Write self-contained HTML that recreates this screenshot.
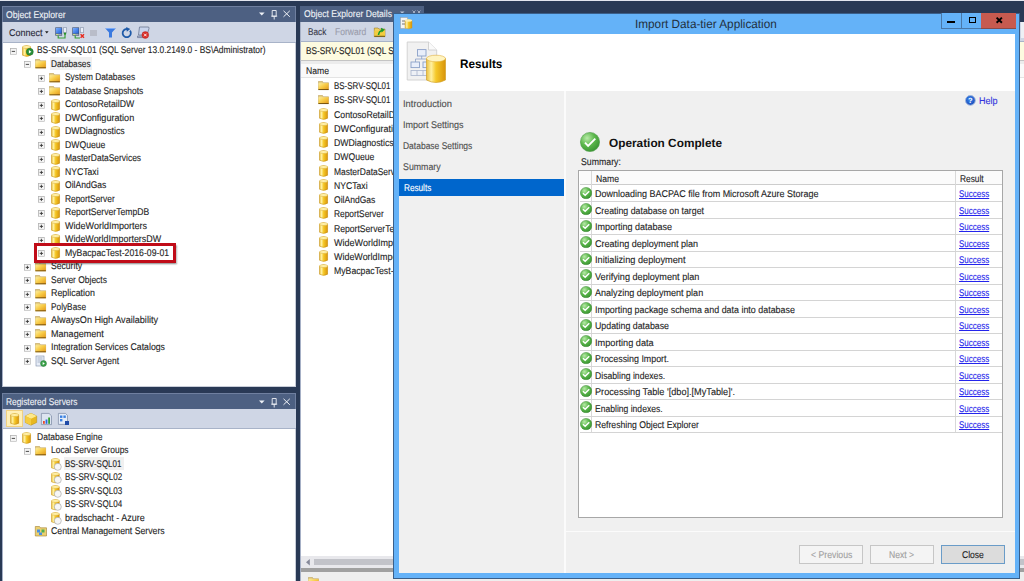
<!DOCTYPE html><html><head><meta charset="utf-8"><title>SSMS</title><style>
*{margin:0;padding:0;box-sizing:border-box}
html,body{width:1024px;height:581px;overflow:hidden;background:#293955;font-family:"Liberation Sans",sans-serif;color:#1e1e1e;text-rendering:geometricPrecision}
.a{position:absolute}
.t{position:absolute;white-space:nowrap;line-height:1;transform-origin:0 0;-webkit-text-stroke:0.12px currentColor}
svg.i{position:absolute;overflow:visible}
</style></head><body>

<svg width="0" height="0" style="position:absolute">
<defs>
<linearGradient id="gold" x1="0" x2="1" y1="0" y2="0">
<stop offset="0" stop-color="#e9c040"/><stop offset="0.25" stop-color="#fff0a0"/><stop offset="0.5" stop-color="#f5c828"/><stop offset="1" stop-color="#d8940a"/>
</linearGradient>
<linearGradient id="fold" x1="0" x2="1" y1="0" y2="1">
<stop offset="0" stop-color="#fff0a0"/><stop offset="0.45" stop-color="#f8cc48"/><stop offset="1" stop-color="#e29618"/>
</linearGradient>
<radialGradient id="grn" cx="0.35" cy="0.3" r="0.85">
<stop offset="0" stop-color="#b8eaa8"/><stop offset="0.45" stop-color="#5cb84c"/><stop offset="1" stop-color="#2f8a2a"/>
</radialGradient>
<linearGradient id="scr" x1="0" y1="0" x2="1" y2="1"><stop offset="0" stop-color="#7fb2ff"/><stop offset="1" stop-color="#1f5fd8"/></linearGradient>
<symbol id="db" viewBox="0 0 9 12"><path d="M0.4 2 Q4.5 -0.4 8.6 2 V10.2 Q4.5 12.6 0.4 10.2Z" fill="url(#gold)" stroke="#c08a10" stroke-width="0.5"/><ellipse cx="4.5" cy="2" rx="4.1" ry="1.5" fill="#fff0a8" stroke="#d0a020" stroke-width="0.4"/></symbol>
<symbol id="folder" viewBox="0 0 11 9.5"><path d="M0.3 0.3 H4.3 L5.2 1.8 H10.7 V9.2 H0.3Z" fill="#e6cf80" stroke="#b09050" stroke-width="0.5"/><path d="M0.3 2.2 H10.7 V9.2 H0.3Z" fill="url(#fold)"/><path d="M0.3 8.9 H10.7" stroke="#5a3c08" stroke-width="0.9"/></symbol>
<symbol id="plus" viewBox="0 0 7 7"><rect x="0.4" y="0.4" width="6.2" height="6.2" fill="#f4f4f4" stroke="#b0b0b0" stroke-width="0.8"/><path d="M1.8 3.5H5.2M3.5 1.8V5.2" stroke="#333" stroke-width="0.9"/></symbol>
<symbol id="minus" viewBox="0 0 7 7"><rect x="0.4" y="0.4" width="6.2" height="6.2" fill="#f4f4f4" stroke="#b0b0b0" stroke-width="0.8"/><path d="M1.8 3.5H5.2" stroke="#333" stroke-width="0.9"/></symbol>
<symbol id="chk" viewBox="0 0 12 12"><circle cx="6" cy="6" r="5.6" fill="url(#grn)" stroke="#3f8a35" stroke-width="0.5"/><path d="M2.9 6.1 L5.1 8.2 L9.1 4.1" fill="none" stroke="#fff" stroke-width="1.4"/></symbol>
</defs></svg>

<div class="a" style="left:0px;top:0px;width:1024px;height:1.4px;background:#e3e6ef;"></div>
<div class="a" style="left:2px;top:6px;width:294px;height:16px;background:#4d6082;border:1px solid #6f7f9f;border-bottom:none"></div>
<div class="t" style="left:6.20px;top:10.60px;font-size:9.8px;color:#eef1f6;font-weight:normal;transform:scaleX(0.8840);">Object Explorer</div>
<svg class="i" style="left:259px;top:10.3px" width="32" height="10"><path d="M0 2.6 H5.6 L2.8 5.4Z" fill="#eef1f6"/><path d="M13.2 0.5 H17.2 V6.2 H13.2Z M12.2 6.2 H18.2 M15.2 6.2 V9.5" fill="none" stroke="#eef1f6" stroke-width="0.9"/><path d="M24.5 0.8 L30.8 6.8 M30.8 0.8 L24.5 6.8" stroke="#eef1f6" stroke-width="1"/></svg>
<div class="a" style="left:2px;top:22px;width:294px;height:20.5px;background:#cfd6e5;border-left:1px solid #a6b0c6;border-bottom:1px solid #a8b3c8"></div>
<div class="a" style="left:2px;top:42.5px;width:293.5px;height:344.5px;background:#fff;border-left:1px solid #a6b0c6;border-right:1px solid #c8cdd8;border-bottom:1px solid #c8cdd8"></div>
<div class="t" style="left:8.50px;top:29.20px;font-size:9.8px;color:#2a2a38;font-weight:normal;transform:scaleX(0.9178);">Connect</div>
<svg class="i" style="left:45px;top:31px" width="4" height="3"><path d="M0 0.3H3.6L1.8 2.4Z" fill="#1e1e1e"/></svg>
<svg class="i" style="left:55px;top:27px" width="13" height="12"><rect x="0.3" y="0.4" width="6.8" height="8.2" fill="#3c4a66"/><rect x="0.8" y="0.9" width="5.8" height="5.6" fill="url(#scr)"/><rect x="0.8" y="6.8" width="5.8" height="1.3" fill="#9aa8c0"/><rect x="1.2" y="7.0" width="2" height="0.9" fill="#d8e870"/><rect x="8.2" y="0.2" width="3.5" height="5.8" fill="#8a96ac"/><rect x="8.8" y="0.8" width="2.3" height="4.6" fill="#e8eef8"/><path d="M3.2 8.6 V11 H10 V6.2" fill="none" stroke="#3aa03a" stroke-width="1.2"/><circle cx="10" cy="6.6" r="1.2" fill="#2a902a"/></svg>
<svg class="i" style="left:71.5px;top:27px" width="13" height="12"><rect x="0.3" y="0.4" width="6.8" height="8.2" fill="#3c4a66"/><rect x="0.8" y="0.9" width="5.8" height="5.6" fill="url(#scr)"/><rect x="0.8" y="6.8" width="5.8" height="1.3" fill="#9aa8c0"/><rect x="1.2" y="7.0" width="2" height="0.9" fill="#d8e870"/><rect x="8.2" y="0.2" width="3.5" height="5.8" fill="#8a96ac"/><rect x="8.8" y="0.8" width="2.3" height="4.6" fill="#e8eef8"/><path d="M3.2 8.6 V11 H8" fill="none" stroke="#3aa03a" stroke-width="1.2"/><path d="M8.6 7.3 L12 10.7 M12 7.3 L8.6 10.7" stroke="#e8281c" stroke-width="1.4"/></svg>
<div class="a" style="left:90.3px;top:30px;width:6.5px;height:6.2px;background:#b9bdc9;"></div>
<svg class="i" style="left:105px;top:27.5px" width="11" height="10"><path d="M0.2 0.2 H10.8 L7 4.5 V9.4 H4 V4.5Z" fill="#3a7ae0"/><path d="M0.8 0.5H10.2" stroke="#8ab8ff" stroke-width="0.7"/></svg>
<svg class="i" style="left:122px;top:27px" width="10" height="11"><path d="M8 3.6 A4.1 4.1 0 1 1 5 2" fill="none" stroke="#1e5aa8" stroke-width="1.8"/><path d="M4.2 0 L8.3 2.1 L4.8 4.7Z" fill="#1e5aa8"/></svg>
<svg class="i" style="left:137px;top:26px" width="13" height="13"><path d="M2.5 1 H11 Q12.5 1 12 2.5 L10 9 H1.5Z" fill="#c8d4ec" stroke="#6a7690" stroke-width="0.8"/><path d="M0.5 10 H9 V11.6 H0.5Z" fill="#a8b6d4" stroke="#6a7690" stroke-width="0.7"/><circle cx="8.3" cy="9" r="3.4" fill="#d9302a" stroke="#b02020" stroke-width="0.4"/><path d="M7 7.7 L9.6 10.3 M9.6 7.7 L7 10.3" stroke="#fff" stroke-width="0.9"/></svg>
<div class="a" style="left:49.7px;top:57.4px;width:42.3px;height:13.1px;background:#f0f0f0;"></div>
<svg class="i" style="left:9.90px;top:47.90px" width="6.8" height="6.8"><use href="#minus" width="6.8" height="6.8"/></svg>
<svg class="i" style="left:22.00px;top:44.80px" width="9.2" height="12"><use href="#db" width="9.2" height="12"/></svg>
<svg class="i" style="left:25.6px;top:48.4px" width="8" height="8"><circle cx="3.8" cy="3.8" r="3.5" fill="#2a9038" stroke="#1d6d26" stroke-width="0.5"/><path d="M2.9 2.1 L5.4 3.8 L2.9 5.5Z" fill="#fff"/></svg>
<div class="t" style="left:36.60px;top:46.00px;font-size:9.8px;color:#1e1e1e;font-weight:normal;transform:scaleX(0.8585);">BS-SRV-SQL01 (SQL Server 13.0.2149.0 - BS\Administrator)</div>
<svg class="i" style="left:24.10px;top:61.40px" width="6.8" height="6.8"><use href="#minus" width="6.8" height="6.8"/></svg>
<svg class="i" style="left:34.85px;top:59.30px" width="11.3" height="9.5"><use href="#folder" width="11.3" height="9.5"/></svg>
<div class="t" style="left:50.95px;top:59.50px;font-size:9.8px;color:#1e1e1e;font-weight:normal;transform:scaleX(0.8454);">Databases</div>
<svg class="i" style="left:38.30px;top:74.90px" width="6.8" height="6.8"><use href="#plus" width="6.8" height="6.8"/></svg>
<svg class="i" style="left:49.20px;top:72.80px" width="11.3" height="9.5"><use href="#folder" width="11.3" height="9.5"/></svg>
<div class="t" style="left:65.30px;top:73.00px;font-size:9.8px;color:#1e1e1e;font-weight:normal;transform:scaleX(0.8524);">System Databases</div>
<svg class="i" style="left:38.30px;top:88.40px" width="6.8" height="6.8"><use href="#plus" width="6.8" height="6.8"/></svg>
<svg class="i" style="left:49.20px;top:86.30px" width="11.3" height="9.5"><use href="#folder" width="11.3" height="9.5"/></svg>
<div class="t" style="left:65.30px;top:86.50px;font-size:9.8px;color:#1e1e1e;font-weight:normal;transform:scaleX(0.8607);">Database Snapshots</div>
<svg class="i" style="left:38.30px;top:101.90px" width="6.8" height="6.8"><use href="#plus" width="6.8" height="6.8"/></svg>
<svg class="i" style="left:50.70px;top:98.80px" width="9.2" height="12"><use href="#db" width="9.2" height="12"/></svg>
<div class="t" style="left:65.30px;top:100.00px;font-size:9.8px;color:#1e1e1e;font-weight:normal;transform:scaleX(0.8888);">ContosoRetailDW</div>
<svg class="i" style="left:38.30px;top:115.40px" width="6.8" height="6.8"><use href="#plus" width="6.8" height="6.8"/></svg>
<svg class="i" style="left:50.70px;top:112.30px" width="9.2" height="12"><use href="#db" width="9.2" height="12"/></svg>
<div class="t" style="left:65.30px;top:113.50px;font-size:9.8px;color:#1e1e1e;font-weight:normal;transform:scaleX(0.9275);">DWConfiguration</div>
<svg class="i" style="left:38.30px;top:128.90px" width="6.8" height="6.8"><use href="#plus" width="6.8" height="6.8"/></svg>
<svg class="i" style="left:50.70px;top:125.80px" width="9.2" height="12"><use href="#db" width="9.2" height="12"/></svg>
<div class="t" style="left:65.30px;top:127.00px;font-size:9.8px;color:#1e1e1e;font-weight:normal;transform:scaleX(0.8915);">DWDiagnostics</div>
<svg class="i" style="left:38.30px;top:142.40px" width="6.8" height="6.8"><use href="#plus" width="6.8" height="6.8"/></svg>
<svg class="i" style="left:50.70px;top:139.30px" width="9.2" height="12"><use href="#db" width="9.2" height="12"/></svg>
<div class="t" style="left:65.30px;top:140.50px;font-size:9.8px;color:#1e1e1e;font-weight:normal;transform:scaleX(0.8831);">DWQueue</div>
<svg class="i" style="left:38.30px;top:155.90px" width="6.8" height="6.8"><use href="#plus" width="6.8" height="6.8"/></svg>
<svg class="i" style="left:50.70px;top:152.80px" width="9.2" height="12"><use href="#db" width="9.2" height="12"/></svg>
<div class="t" style="left:65.30px;top:154.00px;font-size:9.8px;color:#1e1e1e;font-weight:normal;transform:scaleX(0.8628);">MasterDataServices</div>
<svg class="i" style="left:38.30px;top:169.40px" width="6.8" height="6.8"><use href="#plus" width="6.8" height="6.8"/></svg>
<svg class="i" style="left:50.70px;top:166.30px" width="9.2" height="12"><use href="#db" width="9.2" height="12"/></svg>
<div class="t" style="left:65.30px;top:167.50px;font-size:9.8px;color:#1e1e1e;font-weight:normal;transform:scaleX(0.8817);">NYCTaxi</div>
<svg class="i" style="left:38.30px;top:182.90px" width="6.8" height="6.8"><use href="#plus" width="6.8" height="6.8"/></svg>
<svg class="i" style="left:50.70px;top:179.80px" width="9.2" height="12"><use href="#db" width="9.2" height="12"/></svg>
<div class="t" style="left:65.30px;top:181.00px;font-size:9.8px;color:#1e1e1e;font-weight:normal;transform:scaleX(0.8718);">OilAndGas</div>
<svg class="i" style="left:38.30px;top:196.40px" width="6.8" height="6.8"><use href="#plus" width="6.8" height="6.8"/></svg>
<svg class="i" style="left:50.70px;top:193.30px" width="9.2" height="12"><use href="#db" width="9.2" height="12"/></svg>
<div class="t" style="left:65.30px;top:194.50px;font-size:9.8px;color:#1e1e1e;font-weight:normal;transform:scaleX(0.8530);">ReportServer</div>
<svg class="i" style="left:38.30px;top:209.90px" width="6.8" height="6.8"><use href="#plus" width="6.8" height="6.8"/></svg>
<svg class="i" style="left:50.70px;top:206.80px" width="9.2" height="12"><use href="#db" width="9.2" height="12"/></svg>
<div class="t" style="left:65.30px;top:208.00px;font-size:9.8px;color:#1e1e1e;font-weight:normal;transform:scaleX(0.8787);">ReportServerTempDB</div>
<svg class="i" style="left:38.30px;top:223.40px" width="6.8" height="6.8"><use href="#plus" width="6.8" height="6.8"/></svg>
<svg class="i" style="left:50.70px;top:220.30px" width="9.2" height="12"><use href="#db" width="9.2" height="12"/></svg>
<div class="t" style="left:65.30px;top:221.50px;font-size:9.8px;color:#1e1e1e;font-weight:normal;transform:scaleX(0.9213);">WideWorldImporters</div>
<svg class="i" style="left:38.30px;top:236.90px" width="6.8" height="6.8"><use href="#plus" width="6.8" height="6.8"/></svg>
<svg class="i" style="left:50.70px;top:233.80px" width="9.2" height="12"><use href="#db" width="9.2" height="12"/></svg>
<div class="t" style="left:65.30px;top:235.00px;font-size:9.8px;color:#1e1e1e;font-weight:normal;transform:scaleX(0.9125);">WideWorldImportersDW</div>
<svg class="i" style="left:38.30px;top:250.40px" width="6.8" height="6.8"><use href="#plus" width="6.8" height="6.8"/></svg>
<svg class="i" style="left:50.70px;top:247.30px" width="9.2" height="12"><use href="#db" width="9.2" height="12"/></svg>
<div class="t" style="left:65.30px;top:248.50px;font-size:9.8px;color:#1e1e1e;font-weight:normal;transform:scaleX(0.8890);">MyBacpacTest-2016-09-01</div>
<svg class="i" style="left:24.10px;top:263.90px" width="6.8" height="6.8"><use href="#plus" width="6.8" height="6.8"/></svg>
<svg class="i" style="left:34.85px;top:261.80px" width="11.3" height="9.5"><use href="#folder" width="11.3" height="9.5"/></svg>
<div class="t" style="left:50.95px;top:262.00px;font-size:9.8px;color:#1e1e1e;font-weight:normal;transform:scaleX(0.8788);">Security</div>
<svg class="i" style="left:24.10px;top:277.40px" width="6.8" height="6.8"><use href="#plus" width="6.8" height="6.8"/></svg>
<svg class="i" style="left:34.85px;top:275.30px" width="11.3" height="9.5"><use href="#folder" width="11.3" height="9.5"/></svg>
<div class="t" style="left:50.95px;top:275.50px;font-size:9.8px;color:#1e1e1e;font-weight:normal;transform:scaleX(0.8627);">Server Objects</div>
<svg class="i" style="left:24.10px;top:290.90px" width="6.8" height="6.8"><use href="#plus" width="6.8" height="6.8"/></svg>
<svg class="i" style="left:34.85px;top:288.80px" width="11.3" height="9.5"><use href="#folder" width="11.3" height="9.5"/></svg>
<div class="t" style="left:50.95px;top:289.00px;font-size:9.8px;color:#1e1e1e;font-weight:normal;transform:scaleX(0.9057);">Replication</div>
<svg class="i" style="left:24.10px;top:304.40px" width="6.8" height="6.8"><use href="#plus" width="6.8" height="6.8"/></svg>
<svg class="i" style="left:34.85px;top:302.30px" width="11.3" height="9.5"><use href="#folder" width="11.3" height="9.5"/></svg>
<div class="t" style="left:50.95px;top:302.50px;font-size:9.8px;color:#1e1e1e;font-weight:normal;transform:scaleX(0.8456);">PolyBase</div>
<svg class="i" style="left:24.10px;top:317.90px" width="6.8" height="6.8"><use href="#plus" width="6.8" height="6.8"/></svg>
<svg class="i" style="left:34.85px;top:315.80px" width="11.3" height="9.5"><use href="#folder" width="11.3" height="9.5"/></svg>
<div class="t" style="left:50.95px;top:316.00px;font-size:9.8px;color:#1e1e1e;font-weight:normal;transform:scaleX(0.9283);">AlwaysOn High Availability</div>
<svg class="i" style="left:24.10px;top:331.40px" width="6.8" height="6.8"><use href="#plus" width="6.8" height="6.8"/></svg>
<svg class="i" style="left:34.85px;top:329.30px" width="11.3" height="9.5"><use href="#folder" width="11.3" height="9.5"/></svg>
<div class="t" style="left:50.95px;top:329.50px;font-size:9.8px;color:#1e1e1e;font-weight:normal;transform:scaleX(0.9233);">Management</div>
<svg class="i" style="left:24.10px;top:344.90px" width="6.8" height="6.8"><use href="#plus" width="6.8" height="6.8"/></svg>
<svg class="i" style="left:34.85px;top:342.80px" width="11.3" height="9.5"><use href="#folder" width="11.3" height="9.5"/></svg>
<div class="t" style="left:50.95px;top:343.00px;font-size:9.8px;color:#1e1e1e;font-weight:normal;transform:scaleX(0.8907);">Integration Services Catalogs</div>
<svg class="i" style="left:24.10px;top:358.40px" width="6.8" height="6.8"><use href="#plus" width="6.8" height="6.8"/></svg>
<svg class="i" style="left:34.95px;top:354.90px" width="12" height="12"><rect x="1" y="1" width="8" height="10" fill="#e8eef8" stroke="#7d8da8" stroke-width="0.6"/><path d="M2.5 3H7.5M2.5 5H7.5M2.5 7H6" stroke="#7d8da8" stroke-width="0.6"/><circle cx="8.5" cy="8.5" r="3" fill="#3aa14a" stroke="#1d6d26" stroke-width="0.4"/><path d="M7.7 7 L9.8 8.5 L7.7 10Z" fill="#fff"/></svg>
<div class="t" style="left:50.95px;top:356.50px;font-size:9.8px;color:#1e1e1e;font-weight:normal;transform:scaleX(0.8650);">SQL Server Agent</div>
<div class="a" style="left:33.7px;top:243.2px;width:141.9px;height:20.3px;background:transparent;border:3.4px solid #c00c18;box-shadow:1px 1.5px 1.5px rgba(0,0,0,0.35)"></div>
<div class="a" style="left:2px;top:393.4px;width:294px;height:15.2px;background:#4d6082;border:1px solid #6f7f9f;border-bottom:none"></div>
<div class="t" style="left:6.20px;top:397.60px;font-size:9.8px;color:#eef1f6;font-weight:normal;transform:scaleX(0.8514);">Registered Servers</div>
<svg class="i" style="left:259px;top:397.5px" width="32" height="10"><path d="M0 2.6 H5.6 L2.8 5.4Z" fill="#eef1f6"/><path d="M13.2 0.5 H17.2 V6.2 H13.2Z M12.2 6.2 H18.2 M15.2 6.2 V9.5" fill="none" stroke="#eef1f6" stroke-width="0.9"/><path d="M24.5 0.8 L30.8 6.8 M30.8 0.8 L24.5 6.8" stroke="#eef1f6" stroke-width="1"/></svg>
<div class="a" style="left:2px;top:408.6px;width:294px;height:20px;background:#cfd6e5;border-left:1px solid #a6b0c6;border-bottom:1px solid #a8b3c8"></div>
<div class="a" style="left:2px;top:428.6px;width:293.5px;height:153px;background:#fff;border-left:1px solid #a6b0c6;border-right:1px solid #c8cdd8"></div>
<div class="a" style="left:6px;top:410.3px;width:17px;height:16.7px;background:#fff0b8;border:1px solid #f0d080"></div>
<svg class="i" style="left:9.60px;top:412.90px" width="9.4" height="12"><use href="#db" width="9.4" height="12"/></svg>
<svg class="i" style="left:25px;top:412.5px" width="12" height="12.5"><path d="M6 0.3 L11.7 3 V9.5 L6 12.2 L0.3 9.5 V3Z" fill="#e8b820" stroke="#b08810" stroke-width="0.5"/><path d="M6 0.3 L11.7 3 L6 5.7 L0.3 3Z" fill="#fde88a"/><path d="M6 5.7 V12.2 L0.3 9.5 V3Z" fill="#f5cc40"/></svg>
<svg class="i" style="left:41.4px;top:413px" width="11" height="12"><path d="M0.4 0.4 H8 L10.5 2.8 V11.6 H0.4Z" fill="#dde4f0" stroke="#7a88a4" stroke-width="0.7"/><rect x="2" y="8" width="1.8" height="2.8" fill="#e84a2a"/><rect x="4.6" y="6.5" width="1.8" height="4.3" fill="#2a6ae0"/><rect x="7.2" y="4.5" width="1.8" height="6.3" fill="#30a030"/></svg>
<svg class="i" style="left:58.4px;top:413px" width="11" height="12"><path d="M0.4 0.4 H7.5 L9.5 2.5 V11.4 H0.4Z" fill="#e4ecf8" stroke="#7a88a4" stroke-width="0.7"/><rect x="2" y="2.5" width="2.4" height="2.4" fill="#3a80e0"/><rect x="5.4" y="2.5" width="2.4" height="2.4" fill="#3a80e0"/><rect x="2" y="6" width="2.4" height="2.4" fill="#3a80e0"/><rect x="7" y="8" width="4" height="4" fill="#1e4aa8"/></svg>
<div class="a" style="left:64.1px;top:456.9px;width:59.5px;height:13.4px;background:#f0f0f0;"></div>
<svg class="i" style="left:9.90px;top:434.80px" width="6.8" height="6.8"><use href="#minus" width="6.8" height="6.8"/></svg>
<svg class="i" style="left:22.00px;top:431.70px" width="9.2" height="12"><use href="#db" width="9.2" height="12"/></svg>
<div class="t" style="left:36.60px;top:432.90px;font-size:9.8px;color:#1e1e1e;font-weight:normal;transform:scaleX(0.8700);">Database Engine</div>
<svg class="i" style="left:24.10px;top:448.30px" width="6.8" height="6.8"><use href="#minus" width="6.8" height="6.8"/></svg>
<svg class="i" style="left:34.85px;top:446.20px" width="11.3" height="9.5"><use href="#folder" width="11.3" height="9.5"/></svg>
<div class="t" style="left:50.95px;top:446.40px;font-size:9.8px;color:#1e1e1e;font-weight:normal;transform:scaleX(0.8636);">Local Server Groups</div>
<svg class="i" style="left:50.80px;top:458.10px" width="8.8" height="11.6"><use href="#db" width="8.8" height="11.6"/></svg>
<svg class="i" style="left:53.70px;top:462.70px" width="8" height="8"><circle cx="3.8" cy="3.8" r="3.5" fill="#f6f6f6" stroke="#a0a0a0" stroke-width="0.6"/></svg>
<div class="t" style="left:65.30px;top:459.90px;font-size:9.8px;color:#1e1e1e;font-weight:normal;transform:scaleX(0.8097);">BS-SRV-SQL01</div>
<svg class="i" style="left:50.80px;top:471.60px" width="8.8" height="11.6"><use href="#db" width="8.8" height="11.6"/></svg>
<svg class="i" style="left:53.70px;top:476.20px" width="8" height="8"><circle cx="3.8" cy="3.8" r="3.5" fill="#f6f6f6" stroke="#a0a0a0" stroke-width="0.6"/></svg>
<div class="t" style="left:65.30px;top:473.40px;font-size:9.8px;color:#1e1e1e;font-weight:normal;transform:scaleX(0.8227);">BS-SRV-SQL02</div>
<svg class="i" style="left:50.80px;top:485.10px" width="8.8" height="11.6"><use href="#db" width="8.8" height="11.6"/></svg>
<svg class="i" style="left:53.70px;top:489.70px" width="8" height="8"><circle cx="3.8" cy="3.8" r="3.5" fill="#f6f6f6" stroke="#a0a0a0" stroke-width="0.6"/></svg>
<div class="t" style="left:65.30px;top:486.90px;font-size:9.8px;color:#1e1e1e;font-weight:normal;transform:scaleX(0.8227);">BS-SRV-SQL03</div>
<svg class="i" style="left:50.80px;top:498.60px" width="8.8" height="11.6"><use href="#db" width="8.8" height="11.6"/></svg>
<svg class="i" style="left:53.70px;top:503.20px" width="8" height="8"><circle cx="3.8" cy="3.8" r="3.5" fill="#f6f6f6" stroke="#a0a0a0" stroke-width="0.6"/></svg>
<div class="t" style="left:65.30px;top:500.40px;font-size:9.8px;color:#1e1e1e;font-weight:normal;transform:scaleX(0.8227);">BS-SRV-SQL04</div>
<svg class="i" style="left:50.80px;top:512.10px" width="8.8" height="11.6"><use href="#db" width="8.8" height="11.6"/></svg>
<svg class="i" style="left:53.70px;top:516.70px" width="8" height="8"><circle cx="3.8" cy="3.8" r="3.5" fill="#f6f6f6" stroke="#a0a0a0" stroke-width="0.6"/></svg>
<div class="t" style="left:65.30px;top:513.90px;font-size:9.8px;color:#1e1e1e;font-weight:normal;transform:scaleX(0.9146);">bradschacht - Azure</div>
<svg class="i" style="left:34.95px;top:526.30px" width="12" height="11"><path d="M0.3 0.5 H4.5 L5.5 1.8 H11.5 V10 H0.3Z" fill="#ecd070" stroke="#a08030" stroke-width="0.6"/><rect x="2" y="3.5" width="3" height="3" fill="#4a90e0"/><rect x="6.5" y="3.5" width="3" height="3" fill="#50b050"/><rect x="4" y="6.5" width="3" height="2.5" fill="#4a90e0"/></svg>
<div class="t" style="left:50.95px;top:527.40px;font-size:9.8px;color:#1e1e1e;font-weight:normal;transform:scaleX(0.8885);">Central Management Servers</div>
<div class="a" style="left:300px;top:6px;width:124px;height:15.5px;background:#4d6082;"></div>
<svg class="i" style="left:398px;top:9px" width="24" height="8"><path d="M2 2.5H6.5L4.2 4.8Z" fill="#b8c2d6"/><path d="M14.5 1.5L17.5 4.5M17.5 1.5L14.5 4.5" stroke="#aab4c8" stroke-width="0.9"/><path d="M19.5 1.5L22.5 4.5M22.5 1.5L19.5 4.5" stroke="#aab4c8" stroke-width="0.9"/></svg>
<div class="t" style="left:304.20px;top:10.40px;font-size:9.8px;color:#eef1f6;font-weight:normal;transform:scaleX(0.8784);">Object Explorer Details</div>
<div class="a" style="left:300px;top:21.5px;width:724px;height:20.5px;background:#cfd6e5;border-left:1px solid #a6b0c6;border-bottom:1px solid #a8b3c8"></div>
<div class="t" style="left:307.50px;top:28.20px;font-size:9.8px;color:#3a3a4a;font-weight:normal;transform:scaleX(0.8402);">Back</div>
<div class="t" style="left:334.50px;top:28.20px;font-size:9.8px;color:#9a9cab;font-weight:normal;transform:scaleX(0.8710);">Forward</div>
<svg class="i" style="left:373.7px;top:26.8px" width="12" height="10"><path d="M0.3 1 H4 L5 2 H11 V9.6 H0.3Z" fill="#f0d060" stroke="#8a6a10" stroke-width="0.5"/><path d="M0.3 3.5 H11 V9.6 H0.3Z" fill="#f2cc40"/><path d="M0.3 9.3H11" stroke="#4a3a08" stroke-width="0.8"/><path d="M4.5 8 Q5 4 8.5 3.2" fill="none" stroke="#1a9a2a" stroke-width="1.6"/><path d="M7 0.8 L10.8 2.8 L7.6 5.6Z" fill="#1a9a2a"/></svg>
<div class="a" style="left:300px;top:42px;width:724px;height:19px;background:#fdfbe0;border-left:1px solid #a6b0c6;border-bottom:1px solid #c4c4c4"></div>
<div class="t" style="left:305.80px;top:47.20px;font-size:9.8px;color:#1e1e1e;font-weight:normal;transform:scaleX(0.8450);">BS-SRV-SQL01 (SQL Server 13.0.2149.0 - BS\Administrator)</div>
<div class="a" style="left:300px;top:60.7px;width:724px;height:520.3px;background:#fff;border-left:1px solid #a6b0c6"></div>
<div class="a" style="left:301px;top:61px;width:723px;height:16.6px;background:#fafafa;border-top:3.6px solid #ececec;border-bottom:1px solid #e4e4e4"></div>
<div class="t" style="left:306.20px;top:66.90px;font-size:9.8px;color:#1e1e1e;font-weight:normal;transform:scaleX(0.8799);">Name</div>
<svg class="i" style="left:317.60px;top:80.60px" width="11" height="9.2"><use href="#folder" width="11" height="9.2"/></svg>
<div class="t" style="left:333.60px;top:82.00px;font-size:9.8px;color:#1e1e1e;font-weight:normal;transform:scaleX(0.8111);">BS-SRV-SQL01</div>
<svg class="i" style="left:317.60px;top:94.85px" width="11" height="9.2"><use href="#folder" width="11" height="9.2"/></svg>
<div class="t" style="left:333.60px;top:96.25px;font-size:9.8px;color:#1e1e1e;font-weight:normal;transform:scaleX(0.8111);">BS-SRV-SQL01</div>
<svg class="i" style="left:318.80px;top:107.70px" width="9.2" height="12"><use href="#db" width="9.2" height="12"/></svg>
<div class="t" style="left:333.60px;top:110.50px;font-size:9.8px;color:#1e1e1e;font-weight:normal;transform:scaleX(0.8888);">ContosoRetailDW</div>
<svg class="i" style="left:318.80px;top:121.95px" width="9.2" height="12"><use href="#db" width="9.2" height="12"/></svg>
<div class="t" style="left:333.60px;top:124.75px;font-size:9.8px;color:#1e1e1e;font-weight:normal;transform:scaleX(0.9275);">DWConfiguration</div>
<svg class="i" style="left:318.80px;top:136.20px" width="9.2" height="12"><use href="#db" width="9.2" height="12"/></svg>
<div class="t" style="left:333.60px;top:139.00px;font-size:9.8px;color:#1e1e1e;font-weight:normal;transform:scaleX(0.8915);">DWDiagnostics</div>
<svg class="i" style="left:318.80px;top:150.45px" width="9.2" height="12"><use href="#db" width="9.2" height="12"/></svg>
<div class="t" style="left:333.60px;top:153.25px;font-size:9.8px;color:#1e1e1e;font-weight:normal;transform:scaleX(0.8831);">DWQueue</div>
<svg class="i" style="left:318.80px;top:164.70px" width="9.2" height="12"><use href="#db" width="9.2" height="12"/></svg>
<div class="t" style="left:333.60px;top:167.50px;font-size:9.8px;color:#1e1e1e;font-weight:normal;transform:scaleX(0.8628);">MasterDataServices</div>
<svg class="i" style="left:318.80px;top:178.95px" width="9.2" height="12"><use href="#db" width="9.2" height="12"/></svg>
<div class="t" style="left:333.60px;top:181.75px;font-size:9.8px;color:#1e1e1e;font-weight:normal;transform:scaleX(0.8817);">NYCTaxi</div>
<svg class="i" style="left:318.80px;top:193.20px" width="9.2" height="12"><use href="#db" width="9.2" height="12"/></svg>
<div class="t" style="left:333.60px;top:196.00px;font-size:9.8px;color:#1e1e1e;font-weight:normal;transform:scaleX(0.8718);">OilAndGas</div>
<svg class="i" style="left:318.80px;top:207.45px" width="9.2" height="12"><use href="#db" width="9.2" height="12"/></svg>
<div class="t" style="left:333.60px;top:210.25px;font-size:9.8px;color:#1e1e1e;font-weight:normal;transform:scaleX(0.8530);">ReportServer</div>
<svg class="i" style="left:318.80px;top:221.70px" width="9.2" height="12"><use href="#db" width="9.2" height="12"/></svg>
<div class="t" style="left:333.60px;top:224.50px;font-size:9.8px;color:#1e1e1e;font-weight:normal;transform:scaleX(0.8787);">ReportServerTempDB</div>
<svg class="i" style="left:318.80px;top:235.95px" width="9.2" height="12"><use href="#db" width="9.2" height="12"/></svg>
<div class="t" style="left:333.60px;top:238.75px;font-size:9.8px;color:#1e1e1e;font-weight:normal;transform:scaleX(0.9213);">WideWorldImporters</div>
<svg class="i" style="left:318.80px;top:250.20px" width="9.2" height="12"><use href="#db" width="9.2" height="12"/></svg>
<div class="t" style="left:333.60px;top:253.00px;font-size:9.8px;color:#1e1e1e;font-weight:normal;transform:scaleX(0.9125);">WideWorldImportersDW</div>
<svg class="i" style="left:318.80px;top:264.45px" width="9.2" height="12"><use href="#db" width="9.2" height="12"/></svg>
<div class="t" style="left:333.60px;top:267.25px;font-size:9.8px;color:#1e1e1e;font-weight:normal;transform:scaleX(0.8890);">MyBacpacTest-2016-09-01</div>
<div class="a" style="left:301px;top:555.5px;width:723px;height:12.5px;background:#e8e8ec;"></div>
<div class="a" style="left:314.1px;top:558.6px;width:710px;height:6.4px;background:#c2c3c9;"></div>
<svg class="i" style="left:305.5px;top:558.5px" width="4" height="7"><path d="M3.8 0 V6.6 L0 3.3Z" fill="#868999"/></svg>
<div class="a" style="left:301px;top:568px;width:723px;height:3.8px;background:#a0a0a0;"></div>
<div class="a" style="left:301px;top:571.8px;width:723px;height:9.2px;background:#eeeeee;"></div>
<svg class="i" style="left:308.00px;top:576.50px" width="11" height="9.2"><use href="#folder" width="11" height="9.2"/></svg>
<div class="a" style="left:392.6px;top:12.8px;width:627.8px;height:566.6px;background:#64b2f8;border:0.8px solid #3a5f8a"></div>
<div class="a" style="left:398.5px;top:34.8px;width:616.5px;height:538.3px;background:#f0f0f0;"></div>
<svg class="i" style="left:400px;top:17px" width="13" height="13"><rect x="0.5" y="0.5" width="7" height="11" fill="#f4f4f4" stroke="#9a9a9a" stroke-width="0.5"/><path d="M2 4h3M2 7h3" stroke="#555" stroke-width="0.8"/><path d="M5 3.5 Q8.5 2 12 3.5 V11 Q8.5 12.6 5 11Z" fill="url(#gold)" stroke="#c9961e" stroke-width="0.4"/><ellipse cx="8.5" cy="3.5" rx="3.5" ry="1.2" fill="#fff0b0"/></svg>
<div class="t" style="left:634.80px;top:18.24px;font-size:12px;color:#22303e;font-weight:normal;transform:scaleX(0.9797);-webkit-text-stroke:0">Import Data-tier Application</div>
<div class="a" style="left:940.8px;top:12.8px;width:41px;height:15.8px;background:#64b2f8;border:1px solid #4a78a8;border-top:none"></div>
<div class="a" style="left:961.3px;top:12.8px;width:1px;height:15px;background:#4a78a8;"></div>
<div class="a" style="left:981px;top:12.8px;width:35.3px;height:15.8px;background:#c75a4f;border-bottom:1px solid #8a4a48"></div>
<div class="a" style="left:947.2px;top:20.9px;width:7.8px;height:2.6px;background:#000;"></div>
<div class="a" style="left:968.5px;top:17.4px;width:7.4px;height:5.6px;background:transparent;border:1.4px solid #000;border-top-width:1.8px"></div>
<svg class="i" style="left:995.9px;top:17.1px" width="6.5" height="6.4"><path d="M0.6 0.6 L5.9 5.8 M5.9 0.6 L0.6 5.8" stroke="#000" stroke-width="1.9"/></svg>
<div class="a" style="left:398.5px;top:34.4px;width:616.5px;height:56.4px;background:#fff;"></div>
<svg class="i" style="left:406px;top:41px" width="42" height="44"><path d="M1.2 1 H22.5 L30.7 9 V39 H1.2Z" fill="#f1f1f1" stroke="#cfcfcf" stroke-width="0.9"/><path d="M22.5 1 V9 H30.7" fill="#fafafa" stroke="#cfcfcf" stroke-width="0.9"/><rect x="11.5" y="8.6" width="8.5" height="6.4" fill="#e8eefa" stroke="#8aa0c8" stroke-width="0.9"/><path d="M15.7 15 V18 M9.5 18 H22 M9.5 18 V21 M22 18 V21" stroke="#8aa0c8" stroke-width="0.8" fill="none"/><rect x="5" y="21" width="8.5" height="5.6" fill="#e8eefa" stroke="#8aa0c8" stroke-width="0.9"/><rect x="17" y="21" width="7" height="5.6" fill="#e8eefa" stroke="#8aa0c8" stroke-width="0.9"/><rect x="5" y="29.5" width="18" height="5" fill="#eef1f6" stroke="#a8b4cc" stroke-width="0.8"/><path d="M11 29.5V34.5M17 29.5V34.5" stroke="#a8b4cc" stroke-width="0.8"/><path d="M20.5 17.5 Q30 13 39.5 17.5 V39 Q30 44 20.5 39Z" fill="url(#gold)" stroke="#d2a22a" stroke-width="0.7"/><ellipse cx="30" cy="17.5" rx="9.5" ry="3.3" fill="#fff4c0" stroke="#e0b040" stroke-width="0.6"/></svg>
<div class="t" style="left:460.00px;top:58.39px;font-size:12.3px;color:#000;font-weight:bold;-webkit-text-stroke:0;transform:scaleX(0.9545);">Results</div>
<div class="a" style="left:564.3px;top:90.8px;width:1.8px;height:482.3px;background:#fbfbfb;"></div>
<div class="t" style="left:403.40px;top:100.30px;font-size:9.8px;color:#4e4e4e;font-weight:normal;transform:scaleX(0.9550);">Introduction</div>
<div class="t" style="left:403.40px;top:121.40px;font-size:9.8px;color:#4e4e4e;font-weight:normal;transform:scaleX(0.9197);">Import Settings</div>
<div class="t" style="left:403.40px;top:142.30px;font-size:9.8px;color:#4e4e4e;font-weight:normal;transform:scaleX(0.8656);">Database Settings</div>
<div class="t" style="left:403.40px;top:163.30px;font-size:9.8px;color:#4e4e4e;font-weight:normal;transform:scaleX(0.8993);">Summary</div>
<div class="a" style="left:398.5px;top:179.1px;width:165.8px;height:16.7px;background:#0066cc;"></div>
<div class="t" style="left:404.20px;top:184.10px;font-size:9.8px;color:#fff;font-weight:normal;transform:scaleX(0.8356);">Results</div>
<svg class="i" style="left:965px;top:94.7px" width="11" height="11"><defs><radialGradient id="hg" cx="0.45" cy="0.4" r="0.6"><stop offset="0" stop-color="#3a8af0"/><stop offset="1" stop-color="#1a4ab8"/></radialGradient></defs><circle cx="5.4" cy="5.4" r="4.9" fill="url(#hg)" stroke="#a0b8e0" stroke-width="1"/><text x="5.4" y="8.2" font-size="7.5" font-weight="bold" fill="#fff" text-anchor="middle" font-family="Liberation Sans">?</text></svg>
<div class="t" style="left:979.20px;top:97.10px;font-size:9.8px;color:#3333dd;font-weight:normal;transform:scaleX(0.9228);">Help</div>
<svg class="i" style="left:580px;top:131.8px" width="20" height="20"><circle cx="10" cy="10" r="9.6" fill="url(#grn)" stroke="#4a9a45" stroke-width="0.6"/><path d="M5 10.7 L8.1 13.9 L15.3 6.7" fill="none" stroke="#fff" stroke-width="1.9"/></svg>
<div class="t" style="left:609.30px;top:137.61px;font-size:11.8px;color:#111;font-weight:bold;-webkit-text-stroke:0;transform:scaleX(1.0022);">Operation Complete</div>
<div class="t" style="left:580.50px;top:157.60px;font-size:9.8px;color:#1e1e1e;font-weight:normal;transform:scaleX(0.8938);">Summary:</div>
<div class="a" style="left:578.3px;top:170.2px;width:424.5px;height:348.3px;background:#fff;border:1.2px solid #a7a7a7"></div>
<div class="a" style="left:579.5px;top:171.4px;width:422px;height:13.8px;background:#fbfbfb;border-bottom:1.2px solid #cdcdcd"></div>
<div class="a" style="left:591.4px;top:171.4px;width:1.1px;height:261px;background:#d8d8d8;"></div>
<div class="a" style="left:955.3px;top:171.4px;width:1.1px;height:261px;background:#d8d8d8;"></div>
<div class="t" style="left:596.20px;top:175.10px;font-size:9.8px;color:#1e1e1e;font-weight:normal;transform:scaleX(0.8799);">Name</div>
<div class="t" style="left:959.50px;top:175.10px;font-size:9.8px;color:#1e1e1e;font-weight:normal;transform:scaleX(0.8495);">Result</div>
<div class="a" style="left:579.5px;top:201.1px;width:422px;height:1px;background:#d4d4d4;"></div>
<svg class="i" style="left:579.60px;top:186.60px" width="12.2" height="12.2"><use href="#chk" width="12.2" height="12.2"/></svg>
<div class="t" style="left:595.00px;top:190.30px;font-size:9.8px;color:#1e1e1e;font-weight:normal;transform:scaleX(0.9169);">Downloading BACPAC file from Microsoft Azure Storage</div>
<div class="t" style="left:959.30px;top:190.30px;font-size:9.8px;color:#2424ec;font-weight:normal;transform:scaleX(0.8155);text-decoration:underline">Success</div>
<div class="a" style="left:579.5px;top:217.6px;width:422px;height:1px;background:#d4d4d4;"></div>
<svg class="i" style="left:579.60px;top:203.10px" width="12.2" height="12.2"><use href="#chk" width="12.2" height="12.2"/></svg>
<div class="t" style="left:595.00px;top:206.80px;font-size:9.8px;color:#1e1e1e;font-weight:normal;transform:scaleX(0.8974);">Creating database on target</div>
<div class="t" style="left:959.30px;top:206.80px;font-size:9.8px;color:#2424ec;font-weight:normal;transform:scaleX(0.8155);text-decoration:underline">Success</div>
<div class="a" style="left:579.5px;top:234.1px;width:422px;height:1px;background:#d4d4d4;"></div>
<svg class="i" style="left:579.60px;top:219.60px" width="12.2" height="12.2"><use href="#chk" width="12.2" height="12.2"/></svg>
<div class="t" style="left:595.00px;top:223.30px;font-size:9.8px;color:#1e1e1e;font-weight:normal;transform:scaleX(0.9192);">Importing database</div>
<div class="t" style="left:959.30px;top:223.30px;font-size:9.8px;color:#2424ec;font-weight:normal;transform:scaleX(0.8155);text-decoration:underline">Success</div>
<div class="a" style="left:579.5px;top:250.6px;width:422px;height:1px;background:#d4d4d4;"></div>
<svg class="i" style="left:579.60px;top:236.10px" width="12.2" height="12.2"><use href="#chk" width="12.2" height="12.2"/></svg>
<div class="t" style="left:595.00px;top:239.80px;font-size:9.8px;color:#1e1e1e;font-weight:normal;transform:scaleX(0.9234);">Creating deployment plan</div>
<div class="t" style="left:959.30px;top:239.80px;font-size:9.8px;color:#2424ec;font-weight:normal;transform:scaleX(0.8155);text-decoration:underline">Success</div>
<div class="a" style="left:579.5px;top:267.1px;width:422px;height:1px;background:#d4d4d4;"></div>
<svg class="i" style="left:579.60px;top:252.60px" width="12.2" height="12.2"><use href="#chk" width="12.2" height="12.2"/></svg>
<div class="t" style="left:595.00px;top:256.30px;font-size:9.8px;color:#1e1e1e;font-weight:normal;transform:scaleX(0.9389);">Initializing deployment</div>
<div class="t" style="left:959.30px;top:256.30px;font-size:9.8px;color:#2424ec;font-weight:normal;transform:scaleX(0.8155);text-decoration:underline">Success</div>
<div class="a" style="left:579.5px;top:283.6px;width:422px;height:1px;background:#d4d4d4;"></div>
<svg class="i" style="left:579.60px;top:269.10px" width="12.2" height="12.2"><use href="#chk" width="12.2" height="12.2"/></svg>
<div class="t" style="left:595.00px;top:272.80px;font-size:9.8px;color:#1e1e1e;font-weight:normal;transform:scaleX(0.9305);">Verifying deployment plan</div>
<div class="t" style="left:959.30px;top:272.80px;font-size:9.8px;color:#2424ec;font-weight:normal;transform:scaleX(0.8155);text-decoration:underline">Success</div>
<div class="a" style="left:579.5px;top:300.1px;width:422px;height:1px;background:#d4d4d4;"></div>
<svg class="i" style="left:579.60px;top:285.60px" width="12.2" height="12.2"><use href="#chk" width="12.2" height="12.2"/></svg>
<div class="t" style="left:595.00px;top:289.30px;font-size:9.8px;color:#1e1e1e;font-weight:normal;transform:scaleX(0.9239);">Analyzing deployment plan</div>
<div class="t" style="left:959.30px;top:289.30px;font-size:9.8px;color:#2424ec;font-weight:normal;transform:scaleX(0.8155);text-decoration:underline">Success</div>
<div class="a" style="left:579.5px;top:316.6px;width:422px;height:1px;background:#d4d4d4;"></div>
<svg class="i" style="left:579.60px;top:302.10px" width="12.2" height="12.2"><use href="#chk" width="12.2" height="12.2"/></svg>
<div class="t" style="left:595.00px;top:305.80px;font-size:9.8px;color:#1e1e1e;font-weight:normal;transform:scaleX(0.9084);">Importing package schema and data into database</div>
<div class="t" style="left:959.30px;top:305.80px;font-size:9.8px;color:#2424ec;font-weight:normal;transform:scaleX(0.8155);text-decoration:underline">Success</div>
<div class="a" style="left:579.5px;top:333.1px;width:422px;height:1px;background:#d4d4d4;"></div>
<svg class="i" style="left:579.60px;top:318.60px" width="12.2" height="12.2"><use href="#chk" width="12.2" height="12.2"/></svg>
<div class="t" style="left:595.00px;top:322.30px;font-size:9.8px;color:#1e1e1e;font-weight:normal;transform:scaleX(0.8997);">Updating database</div>
<div class="t" style="left:959.30px;top:322.30px;font-size:9.8px;color:#2424ec;font-weight:normal;transform:scaleX(0.8155);text-decoration:underline">Success</div>
<div class="a" style="left:579.5px;top:349.6px;width:422px;height:1px;background:#d4d4d4;"></div>
<svg class="i" style="left:579.60px;top:335.10px" width="12.2" height="12.2"><use href="#chk" width="12.2" height="12.2"/></svg>
<div class="t" style="left:595.00px;top:338.80px;font-size:9.8px;color:#1e1e1e;font-weight:normal;transform:scaleX(0.9371);">Importing data</div>
<div class="t" style="left:959.30px;top:338.80px;font-size:9.8px;color:#2424ec;font-weight:normal;transform:scaleX(0.8155);text-decoration:underline">Success</div>
<div class="a" style="left:579.5px;top:366.1px;width:422px;height:1px;background:#d4d4d4;"></div>
<svg class="i" style="left:579.60px;top:351.60px" width="12.2" height="12.2"><use href="#chk" width="12.2" height="12.2"/></svg>
<div class="t" style="left:595.00px;top:355.30px;font-size:9.8px;color:#1e1e1e;font-weight:normal;transform:scaleX(0.9061);">Processing Import.</div>
<div class="t" style="left:959.30px;top:355.30px;font-size:9.8px;color:#2424ec;font-weight:normal;transform:scaleX(0.8155);text-decoration:underline">Success</div>
<div class="a" style="left:579.5px;top:382.6px;width:422px;height:1px;background:#d4d4d4;"></div>
<svg class="i" style="left:579.60px;top:368.10px" width="12.2" height="12.2"><use href="#chk" width="12.2" height="12.2"/></svg>
<div class="t" style="left:595.00px;top:371.80px;font-size:9.8px;color:#1e1e1e;font-weight:normal;transform:scaleX(0.8816);">Disabling indexes.</div>
<div class="t" style="left:959.30px;top:371.80px;font-size:9.8px;color:#2424ec;font-weight:normal;transform:scaleX(0.8155);text-decoration:underline">Success</div>
<div class="a" style="left:579.5px;top:399.1px;width:422px;height:1px;background:#d4d4d4;"></div>
<svg class="i" style="left:579.60px;top:384.60px" width="12.2" height="12.2"><use href="#chk" width="12.2" height="12.2"/></svg>
<div class="t" style="left:595.00px;top:388.30px;font-size:9.8px;color:#1e1e1e;font-weight:normal;transform:scaleX(0.9329);">Processing Table '[dbo].[MyTable]'.</div>
<div class="t" style="left:959.30px;top:388.30px;font-size:9.8px;color:#2424ec;font-weight:normal;transform:scaleX(0.8155);text-decoration:underline">Success</div>
<div class="a" style="left:579.5px;top:415.6px;width:422px;height:1px;background:#d4d4d4;"></div>
<svg class="i" style="left:579.60px;top:401.10px" width="12.2" height="12.2"><use href="#chk" width="12.2" height="12.2"/></svg>
<div class="t" style="left:595.00px;top:404.80px;font-size:9.8px;color:#1e1e1e;font-weight:normal;transform:scaleX(0.8740);">Enabling indexes.</div>
<div class="t" style="left:959.30px;top:404.80px;font-size:9.8px;color:#2424ec;font-weight:normal;transform:scaleX(0.8155);text-decoration:underline">Success</div>
<div class="a" style="left:579.5px;top:432.1px;width:422px;height:1px;background:#d4d4d4;"></div>
<svg class="i" style="left:579.60px;top:417.60px" width="12.2" height="12.2"><use href="#chk" width="12.2" height="12.2"/></svg>
<div class="t" style="left:595.00px;top:421.30px;font-size:9.8px;color:#1e1e1e;font-weight:normal;transform:scaleX(0.8833);">Refreshing Object Explorer</div>
<div class="t" style="left:959.30px;top:421.30px;font-size:9.8px;color:#2424ec;font-weight:normal;transform:scaleX(0.8155);text-decoration:underline">Success</div>
<div class="a" style="left:566px;top:530.8px;width:449px;height:1px;background:#fbfbfb;"></div>
<div class="a" style="left:799.3px;top:545px;width:63.8px;height:18.6px;background:#f4f4f4;border:1px solid #c6c6c6"></div>
<div class="t" style="left:811.40px;top:551.20px;font-size:9.8px;color:#a0a0a0;font-weight:normal;transform:scaleX(0.8891);">&lt; Previous</div>
<div class="a" style="left:870px;top:545px;width:63.7px;height:18.6px;background:#f4f4f4;border:1px solid #c6c6c6"></div>
<div class="t" style="left:889.20px;top:551.20px;font-size:9.8px;color:#a0a0a0;font-weight:normal;transform:scaleX(0.8743);">Next &gt;</div>
<div class="a" style="left:940.5px;top:545px;width:64px;height:18.6px;background:#dcdcdc;border:1.4px solid #6a9cc8"></div>
<div class="t" style="left:961.70px;top:551.20px;font-size:9.8px;color:#1e1e1e;font-weight:normal;transform:scaleX(0.8698);">Close</div>
<div class="a" style="left:1021px;top:22px;width:3px;height:16px;background:#eef0f5;"></div>
</body></html>
